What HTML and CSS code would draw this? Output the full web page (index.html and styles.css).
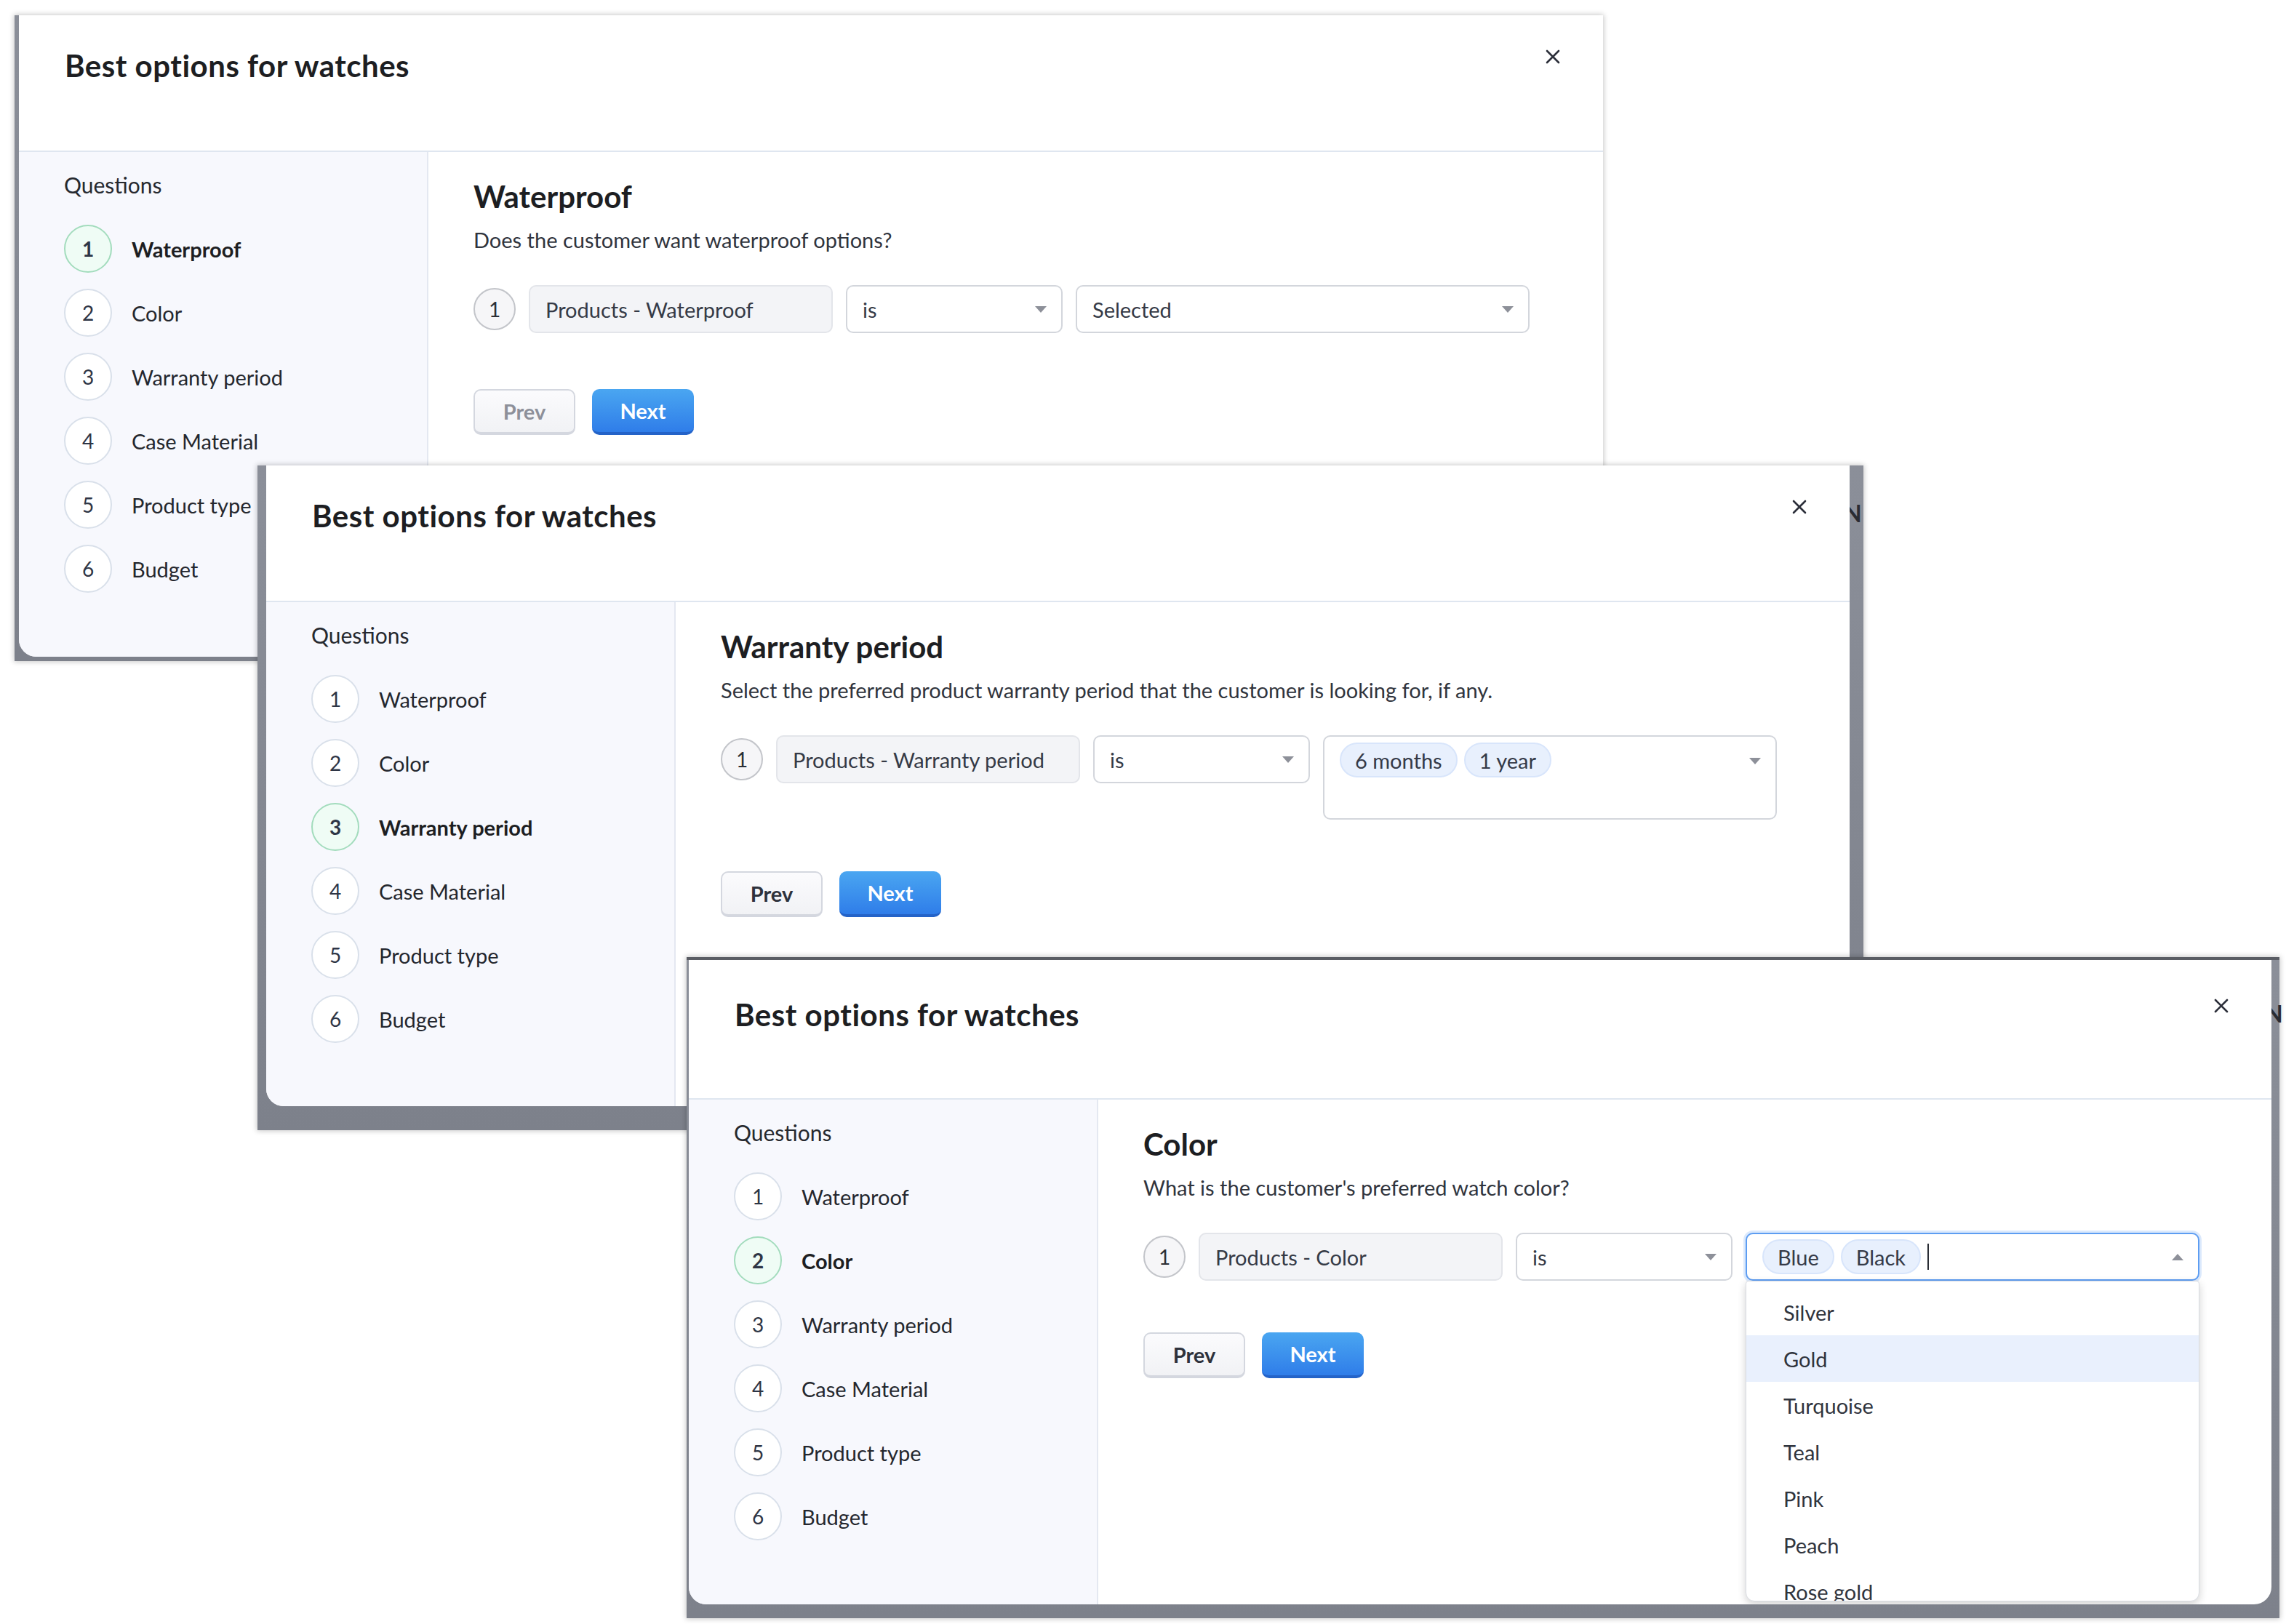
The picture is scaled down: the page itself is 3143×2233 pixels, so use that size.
FILE: index.html
```html
<!DOCTYPE html>
<html lang="en">
<head>
<meta charset="utf-8">
<title>Best options for watches</title>
<link rel="stylesheet" href="styles.css">
</head>
<body>
<div class="canvas">

  <!-- Shot 1 : Waterproof -->
  <div class="shot shot-1">
    <div class="dialog">
      <header class="dlg-head">
        <h1 class="dlg-title">Best options for watches</h1>
        <button class="close" aria-label="Close"><svg viewBox="0 0 20 20" width="20" height="20"><path d="M2 2 L18 18 M18 2 L2 18" stroke="#2c2f3a" stroke-width="2.6" stroke-linecap="round"/></svg></button>
      </header>
      <div class="dlg-body">
        <aside class="sidebar">
          <h2 class="side-title">Questions</h2>
          <ol class="steps">
            <li class="step active"><span class="step-num">1</span><span class="step-label">Waterproof</span></li>
            <li class="step"><span class="step-num">2</span><span class="step-label">Color</span></li>
            <li class="step"><span class="step-num">3</span><span class="step-label">Warranty period</span></li>
            <li class="step"><span class="step-num">4</span><span class="step-label">Case Material</span></li>
            <li class="step"><span class="step-num">5</span><span class="step-label">Product type</span></li>
            <li class="step"><span class="step-num">6</span><span class="step-label">Budget</span></li>
          </ol>
        </aside>
        <section class="main">
          <h2 class="q-title">Waterproof</h2>
          <p class="q-desc">Does the customer want waterproof options?</p>
          <div class="cond-row">
            <span class="cond-num">1</span>
            <div class="field field-ro">Products - Waterproof</div>
            <div class="field field-op"><span class="field-text">is</span><span class="caret"></span></div>
            <div class="field field-val"><span class="field-text">Selected</span><span class="caret"></span></div>
          </div>
          <div class="actions actions-wide">
            <button class="btn btn-prev is-disabled">Prev</button>
            <button class="btn btn-next">Next</button>
          </div>
        </section>
      </div>
    </div>
  </div>

  <!-- Shot 2 : Warranty period -->
  <div class="shot shot-2">
    <span class="bg-letter bg-letter-2">N</span>
    <div class="dialog">
      <header class="dlg-head">
        <h1 class="dlg-title">Best options for watches</h1>
        <button class="close" aria-label="Close"><svg viewBox="0 0 20 20" width="20" height="20"><path d="M2 2 L18 18 M18 2 L2 18" stroke="#2c2f3a" stroke-width="2.6" stroke-linecap="round"/></svg></button>
      </header>
      <div class="dlg-body">
        <aside class="sidebar">
          <h2 class="side-title">Questions</h2>
          <ol class="steps">
            <li class="step"><span class="step-num">1</span><span class="step-label">Waterproof</span></li>
            <li class="step"><span class="step-num">2</span><span class="step-label">Color</span></li>
            <li class="step active"><span class="step-num">3</span><span class="step-label">Warranty period</span></li>
            <li class="step"><span class="step-num">4</span><span class="step-label">Case Material</span></li>
            <li class="step"><span class="step-num">5</span><span class="step-label">Product type</span></li>
            <li class="step"><span class="step-num">6</span><span class="step-label">Budget</span></li>
          </ol>
        </aside>
        <section class="main">
          <h2 class="q-title">Warranty period</h2>
          <p class="q-desc">Select the preferred product warranty period that the customer is looking for, if any.</p>
          <div class="cond-row">
            <span class="cond-num">1</span>
            <div class="field field-ro">Products - Warranty period</div>
            <div class="field field-op"><span class="field-text">is</span><span class="caret"></span></div>
            <div class="field field-val field-tall">
              <div class="chips"><span class="chip">6 months</span><span class="chip">1 year</span></div>
              <span class="caret"></span>
            </div>
          </div>
          <div class="actions">
            <button class="btn btn-prev">Prev</button>
            <button class="btn btn-next">Next</button>
          </div>
        </section>
      </div>
    </div>
  </div>

  <!-- Shot 3 : Color -->
  <div class="shot shot-3">
    <span class="bg-letter bg-letter-3">N</span>
    <div class="dialog dialog-tall">
      <header class="dlg-head">
        <h1 class="dlg-title">Best options for watches</h1>
        <button class="close" aria-label="Close"><svg viewBox="0 0 20 20" width="20" height="20"><path d="M2 2 L18 18 M18 2 L2 18" stroke="#2c2f3a" stroke-width="2.6" stroke-linecap="round"/></svg></button>
      </header>
      <div class="dlg-body">
        <aside class="sidebar">
          <h2 class="side-title">Questions</h2>
          <ol class="steps">
            <li class="step"><span class="step-num">1</span><span class="step-label">Waterproof</span></li>
            <li class="step active"><span class="step-num">2</span><span class="step-label">Color</span></li>
            <li class="step"><span class="step-num">3</span><span class="step-label">Warranty period</span></li>
            <li class="step"><span class="step-num">4</span><span class="step-label">Case Material</span></li>
            <li class="step"><span class="step-num">5</span><span class="step-label">Product type</span></li>
            <li class="step"><span class="step-num">6</span><span class="step-label">Budget</span></li>
          </ol>
        </aside>
        <section class="main">
          <h2 class="q-title">Color</h2>
          <p class="q-desc">What is the customer's preferred watch color?</p>
          <div class="cond-row">
            <span class="cond-num">1</span>
            <div class="field field-ro">Products - Color</div>
            <div class="field field-op"><span class="field-text">is</span><span class="caret"></span></div>
            <div class="field field-val is-focused">
              <div class="chips"><span class="chip">Blue</span><span class="chip">Black</span><span class="text-cursor"></span></div>
              <span class="caret caret-up"></span>
              <ul class="menu">
                <li class="menu-item">Silver</li>
                <li class="menu-item is-hover">Gold</li>
                <li class="menu-item">Turquoise</li>
                <li class="menu-item">Teal</li>
                <li class="menu-item">Pink</li>
                <li class="menu-item">Peach</li>
                <li class="menu-item">Rose gold</li>
              </ul>
            </div>
          </div>
          <div class="actions">
            <button class="btn btn-prev">Prev</button>
            <button class="btn btn-next">Next</button>
          </div>
        </section>
      </div>
    </div>
  </div>

</div>
</body>
</html>
```

FILE: styles.css
```css
* { box-sizing: border-box; }

html, body {
  margin: 0;
  padding: 0;
  background: #ffffff;
}

body {
  font-family: Lato, "Noto Sans", "Liberation Sans", sans-serif;
  color: #262a33;
}

.canvas {
  position: relative;
  width: 3143px;
  height: 2233px;
  overflow: hidden;
}

/* ---------- screenshot frames (free canvas) ---------- */
.shot {
  position: absolute;
  background: linear-gradient(180deg, #8b8f99 0%, #7d818b 100%);
  box-shadow: 0 0 7px 1px rgba(0, 0, 0, 0.22);
  display: flex;
}

.shot-1 {
  left: 20px;
  top: 21px;
  width: 2184px;
  height: 888px;
  padding: 0 0 6px 6px;
  z-index: 1;
}

.shot-2 {
  left: 354px;
  top: 640px;
  width: 2208px;
  height: 914px;
  padding: 0 19px 33px 12px;
  z-index: 2;
}

.shot-3 {
  left: 944px;
  top: 1316px;
  width: 2190px;
  height: 909px;
  padding: 4px 11px 19px 3px;
  z-index: 3;
  background: linear-gradient(180deg, #5a5d64 0, #5a5d64 4px, #8b8f99 4px, #7d818b 100%);
}

.bg-letter {
  position: absolute;
  font-weight: 700;
  font-size: 32px;
  color: #2a2c33;
}
.bg-letter-2 { left: 2181px; top: 46px; }
.bg-letter-3 { left: 2170px; top: 58px; }

/* ---------- dialog ---------- */
.dialog {
  position: relative;
  flex: 1;
  display: flex;
  flex-direction: column;
  background: #ffffff;
  border-radius: 0 0 24px 24px;
  overflow: hidden;
}

.dlg-head {
  height: 188px;
  flex: none;
  display: flex;
  justify-content: space-between;
  align-items: flex-start;
  padding: 45px 58px 0 63px;
  border-bottom: 2px solid #dfe6f0;
}

.dialog-tall .dlg-head {
  height: 192px;
  padding-top: 51px;
}

.dlg-title {
  margin: 0;
  font-size: 42px;
  line-height: 48px;
  font-weight: 700;
  color: #1d1e22;
  letter-spacing: 0.5px;
}

.close {
  margin-top: 1px;
  padding: 0;
  width: 22px;
  height: 22px;
  border: 0;
  background: transparent;
  display: flex;
  align-items: center;
  justify-content: center;
}

.dlg-body {
  flex: 1;
  display: flex;
}

/* ---------- sidebar ---------- */
.sidebar {
  width: 563px;
  flex: none;
  background: #f7f8fd;
  border-right: 2px solid #e4e8f1;
  padding: 27px 0 0 62px;
}

.side-title {
  margin: 0;
  font-size: 30px;
  line-height: 36px;
  font-weight: 400;
  color: #26292f;
}

.steps {
  list-style: none;
  margin: 37px 0 0;
  padding: 0;
  display: flex;
  flex-direction: column;
  gap: 22px;
}

.step {
  display: flex;
  align-items: center;
  gap: 27px;
  height: 66px;
}

.step-num {
  width: 66px;
  height: 66px;
  flex: none;
  border-radius: 50%;
  border: 2px solid #d9e0ea;
  background: #ffffff;
  display: flex;
  align-items: center;
  justify-content: center;
  font-size: 28px;
  color: #2e3545;
}

.step-label {
  font-size: 29px;
  color: #24272e;
}

.step.active .step-num {
  border-color: #a3dcbd;
  background: #effcf5;
  font-weight: 700;
}

.step.active .step-label {
  font-weight: 700;
  color: #1d1e22;
}

/* ---------- main ---------- */
.main {
  flex: 1;
  padding: 37px 0 0 62px;
  display: flex;
  flex-direction: column;
  align-items: flex-start;
}

.q-title {
  margin: 0;
  font-size: 42px;
  line-height: 48px;
  font-weight: 700;
  color: #1d1e22;
}

.q-desc {
  margin: 18px 0 0;
  font-size: 29px;
  line-height: 35px;
  color: #30343d;
}

.cond-row {
  margin-top: 45px;
  display: flex;
  align-items: flex-start;
  gap: 18px;
}

.cond-num {
  margin-top: 4px;
  width: 58px;
  height: 58px;
  flex: none;
  border-radius: 50%;
  border: 2px solid #c3c5ca;
  background: #f6f6f8;
  display: flex;
  align-items: center;
  justify-content: center;
  font-size: 28px;
  color: #2c2f36;
}

.field {
  position: relative;
  height: 66px;
  border-radius: 10px;
  border: 2px solid #d3d6dc;
  background: #ffffff;
  display: flex;
  align-items: center;
  padding: 0 20px 0 21px;
  font-size: 29px;
  color: #353a46;
}

.field-ro {
  width: 418px;
  background: #f3f4f7;
  border-color: #e3e5ea;
}

.field-op { width: 298px; }
.field-val { width: 624px; }

.field-text { flex: 1; }

.caret {
  flex: none;
  margin-left: auto;
  width: 0;
  height: 0;
  border-left: 8px solid transparent;
  border-right: 8px solid transparent;
  border-top: 9px solid #8d9099;
}

.caret-up {
  border-top: 0;
  border-bottom: 9px solid #8d9099;
}

.field-tall {
  height: 116px;
  align-items: flex-start;
  padding-top: 8px;
}
.field-tall .caret { margin-top: 21px; }

.chips {
  display: flex;
  align-items: center;
  gap: 9px;
}

.chip {
  height: 48px;
  padding: 0 19px;
  border-radius: 24px;
  background: #e8f0fd;
  border: 2px solid #d8e5fb;
  display: flex;
  align-items: center;
  font-size: 29px;
  color: #353a48;
}

.text-cursor {
  width: 2px;
  height: 36px;
  background: #2a2d35;
  margin-left: 0;
}

.field.is-focused {
  border-color: #5d9df2;
  box-shadow: 0 0 0 3px rgba(93, 157, 242, 0.22);
}

/* dropdown menu (overlay) */
.menu {
  position: absolute;
  left: -2px;
  top: 64px;
  width: 624px;
  height: 441px;
  margin: 0;
  padding: 10px 0 0;
  list-style: none;
  background: #ffffff;
  border: 1px solid #d8dbe1;
  border-radius: 4px 4px 12px 12px;
  box-shadow: 0 4px 12px rgba(0, 0, 0, 0.18);
  overflow: hidden;
  z-index: 5;
}

.menu-item {
  height: 64px;
  display: flex;
  align-items: center;
  padding-left: 51px;
  font-size: 29px;
  color: #30343d;
}

.menu-item.is-hover { background: #e9f0fd; }

/* ---------- actions ---------- */
.actions {
  margin-top: 71px;
  display: flex;
  gap: 23px;
}

.actions-wide { margin-top: 77px; }

.btn {
  width: 140px;
  height: 63px;
  border-radius: 10px;
  font-family: Lato, "Noto Sans", "Liberation Sans", sans-serif;
  font-size: 29px;
  font-weight: 700;
  display: flex;
  align-items: center;
  justify-content: center;
  padding: 0;
}

.btn-prev {
  background: linear-gradient(180deg, #fbfbfd 0%, #f1f2f5 100%);
  border: 2px solid #d4d7df;
  border-bottom-width: 4px;
  color: #2e323c;
}

.btn-prev.is-disabled { color: #8d909a; }

.btn-next {
  background: linear-gradient(180deg, #4aa6f1 0%, #2f7de9 100%);
  border: 0;
  border-bottom: 4px solid #2463c8;
  color: #ffffff;
}
```
